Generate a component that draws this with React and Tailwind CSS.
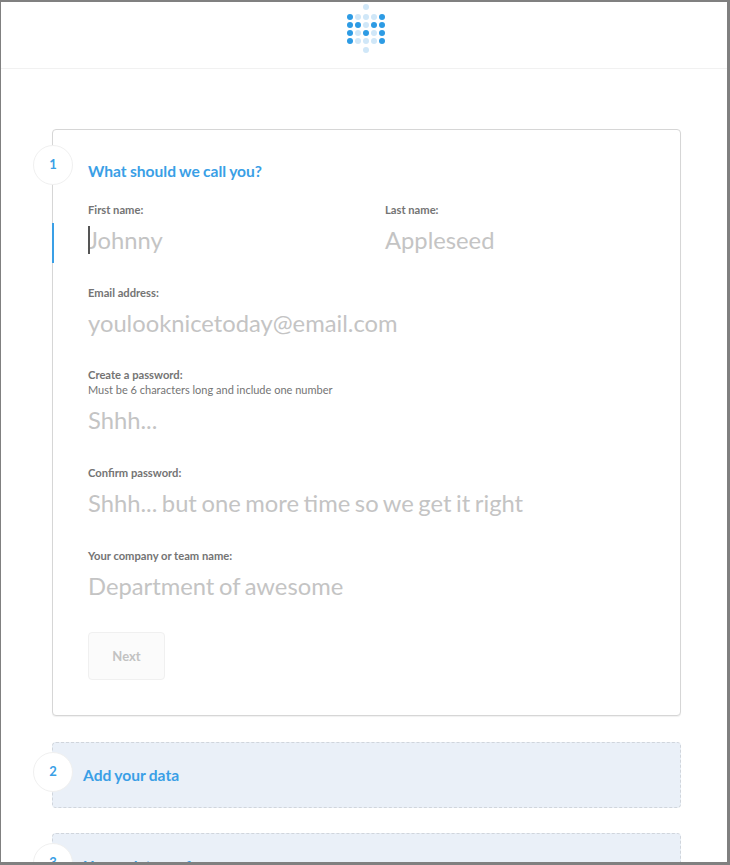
const logoDots = [
  [366, 7, 0],
  [350, 17, 1], [358, 17, 0], [366, 17, 0], [374, 17, 0], [382, 17, 1],
  [350, 25, 1], [358, 25, 1], [366, 25, 0], [374, 25, 1], [382, 25, 1],
  [350, 33, 1], [358, 33, 0], [366, 33, 1], [374, 33, 0], [382, 33, 1],
  [350, 41, 1], [358, 41, 0], [366, 41, 0], [374, 41, 0], [382, 41, 1],
  [366, 50, 0],
];

function Logo() {
  return (
    <svg width="48" height="56" viewBox="342 2 48 56">
      {logoDots.map(([cx, cy, dark]) => (
        <circle key={`${cx}-${cy}`} cx={cx} cy={cy} r="3" fill={dark ? '#2d9be4' : '#d0e7f8'} />
      ))}
    </svg>
  );
}

function StepCircle({ n, className = '' }) {
  return (
    <div className={`absolute left-[-20px] flex h-10 w-10 items-center justify-center rounded-full border border-[#f0f0f0] bg-white text-[13px] font-bold text-[#3a9fe6] ${className}`}>
      {n}
    </div>
  );
}

function Field({ label, hint, placeholder, caret, className = '' }) {
  return (
    <div className={className}>
      <div className="text-[11.2px] font-bold leading-[14px] text-[#747474]">{label}</div>
      {hint && <div className="text-[11px] leading-[15px] text-[#747474]">{hint}</div>}
      <div className="relative mt-[3px] h-[40px] text-[23.75px] leading-[40px] text-[#c4c4c4] [word-spacing:-1.5px]">
        {caret && <span className="absolute left-0 top-[6px] h-[28px] w-[1.5px] bg-[#555]" />}
        {placeholder}
      </div>
    </div>
  );
}

function CollapsedStep({ n, title, className = '' }) {
  return (
    <div className={`relative flex h-[66px] items-center rounded border border-dashed border-[#d0d5dc] bg-[#eaf0f8] pl-[30px] ${className}`}>
      <StepCircle n={n} className="top-[9px]" />
      <h2 className="pt-[1px] text-[15.6px] font-bold text-[#3a9fe6] [word-spacing:-0.5px]">{title}</h2>
    </div>
  );
}

export default function App() {
  return (
    <div className="h-[865px] overflow-hidden border-t-2 border-r-[3px] border-b-[3px] border-l border-[#808080] bg-white font-['Lato',sans-serif]">
      <header className="flex h-[67px] justify-center border-b border-[#f1f1f1] pl-[4px]">
        <Logo />
      </header>

      <main className="mx-[51px] mt-[60px] w-[629px]">
        <section className="relative h-[587px] rounded border border-[#d6d6d6] bg-white pl-[35px] pt-[15px] shadow-[0_1px_1px_rgba(0,0,0,0.06)]">
          <StepCircle n={1} />
          <span className="absolute left-[-1px] top-[93px] h-[40px] w-[2px] bg-[#3a9fe6]" />
          <h2 className="mt-[16px] text-[15.6px] font-bold leading-[20px] text-[#3a9fe6] [word-spacing:-0.5px]">What should we call you?</h2>

          <div className="mt-[22px] flex">
            <Field label="First name:" placeholder="Johnny" caret className="w-[297px]" />
            <Field label="Last name:" placeholder="Appleseed" />
          </div>
          <Field label="Email address:" placeholder="youlooknicetoday@email.com" className="mt-[26px]" />
          <Field label="Create a password:" hint="Must be 6 characters long and include one number" placeholder="Shhh..." className="mt-[25px]" />
          <Field label="Confirm password:" placeholder="Shhh... but one more time so we get it right" className="mt-[26px]" />
          <Field label="Your company or team name:" placeholder="Department of awesome" className="mt-[26px]" />

          <button type="button" className="mt-[26px] h-[48px] w-[77px] rounded border border-[#f0f0f0] bg-[#fbfbfb] pt-[2px] text-[13px] font-bold text-[#c2c2c2]">
            Next
          </button>
        </section>

        <CollapsedStep n={2} title="Add your data" className="mt-[26px]" />
        <CollapsedStep n={3} title="Usage data preferences" className="mt-[25px]" />
      </main>
    </div>
  );
}
